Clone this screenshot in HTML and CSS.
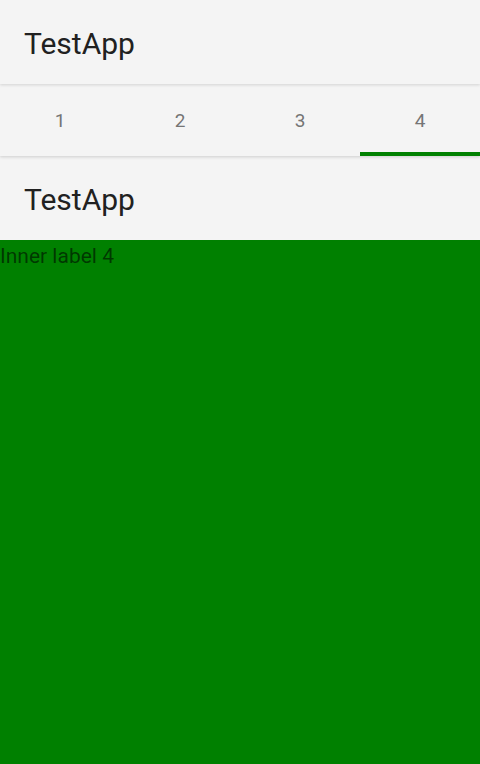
FILE: index.html
```html
<!DOCTYPE html>
<html>
<head>
<meta charset="utf-8">
<link rel="stylesheet" href="styles.css">
</head>
<body>
<div class="app">
  <header class="appbar appbar-top"><span class="title">TestApp</span></header>
  <nav class="tabs">
    <div class="tab">1</div>
    <div class="tab">2</div>
    <div class="tab">3</div>
    <div class="tab active">4</div>
  </nav>
  <header class="appbar appbar-inner"><span class="title">TestApp</span></header>
  <main class="content"><span class="label">Inner label 4</span></main>
</div>
</body>
</html>
```
FILE: styles.css
```css
html, body {
  margin: 0;
  padding: 0;
  height: 100%;
}
body {
  font-family: Roboto, "Liberation Sans", sans-serif;
  background: #f4f4f4;
}
.app {
  display: flex;
  flex-direction: column;
  height: 764px;
  overflow: hidden;
}
.appbar {
  height: 84px;
  flex: 0 0 84px;
  display: flex;
  align-items: center;
  padding: 2px 0 0 24px;
  background: #f4f4f4;
  box-sizing: border-box;
  position: relative;
}
.appbar-top {
  z-index: 2;
  box-shadow: 0 1px 3px rgba(0,0,0,0.14);
}
.title {
  font-size: 30px;
  color: #212121;
  font-weight: 400;
}
.tabs {
  display: flex;
  height: 72px;
  flex: 0 0 72px;
  background: #f4f4f4;
  position: relative;
  z-index: 1;
  box-shadow: 0 1px 3px rgba(0,0,0,0.16);
}
.tab {
  flex: 1;
  display: flex;
  align-items: center;
  justify-content: center;
  font-size: 19px;
  color: #757575;
  box-sizing: border-box;
  border-bottom: 4px solid transparent;
  padding-top: 4px;
}
.tab.active {
  border-bottom-color: #008000;
}
.content {
  flex: 1;
  background: #008000;
}
.label {
  display: block;
  font-size: 21px;
  line-height: 32px;
  color: rgba(0,0,0,0.58);
}
```
